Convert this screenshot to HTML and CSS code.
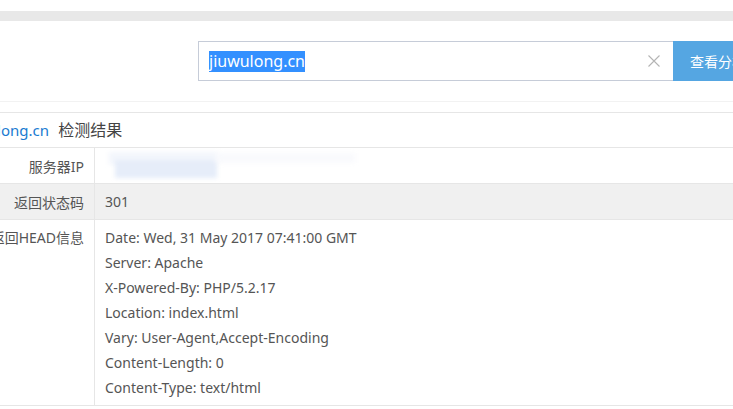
FILE: index.html
```html
<!DOCTYPE html>
<html>
<head>
    <title>检测结果</title>
    <link rel="stylesheet" href="styles.css">
</head>
<body>
    <div class="top-bar"></div>

    <div class="search-box">
        <div class="search-input">
            <span class="selected">jiuwulong.cn</span>
            <svg class="clear" width="12" height="12" viewBox="0 0 12 12">
                <path d="M0.5 0.5 L11.5 11.5 M11.5 0.5 L0.5 11.5" stroke="#b4b4b4" stroke-width="1.1" fill="none"/>
            </svg>
        </div>
        <button class="search-btn">查看分析结果</button>
    </div>

    <div class="result">
        <div class="result-title"><span class="domain">jiuwulong.cn</span> 检测结果</div>
        <table class="result-table">
            <tr>
                <td class="label">服务器IP</td>
                <td class="value">
                    <div class="ip-blur">
                        <span class="b1"></span><span class="b2"></span><span class="b3"></span>
                    </div>
                </td>
            </tr>
            <tr class="gray">
                <td class="label">返回状态码</td>
                <td class="value">301</td>
            </tr>
            <tr>
                <td class="label top">返回HEAD信息</td>
                <td class="value head">
                    Date: Wed, 31 May 2017 07:41:00 GMT<br>
                    Server: Apache<br>
                    X-Powered-By: PHP/5.2.17<br>
                    Location: index.html<br>
                    Vary: User-Agent,Accept-Encoding<br>
                    Content-Length: 0<br>
                    Content-Type: text/html
                </td>
            </tr>
        </table>
    </div>
</body>
</html>
```

FILE: styles.css
```css
body {
    margin: 0;
    overflow: hidden;
    background: #fff;
    font-family: "Noto Sans", "Noto Sans CJK SC", sans-serif;
    color: #555;
}
.top-bar {
    margin-top: 11px;
    height: 10px;
    background: #e8e8e8;
}
.search-box {
    display: flex;
    padding: 20px 0 20px 198px;
    border-bottom: 1px solid #f2f2f2;
    white-space: nowrap;
}
.search-input {
    flex: none;
    box-sizing: border-box;
    width: 475px;
    height: 40px;
    border: 1px solid #c6ccd8;
    border-right: none;
    display: flex;
    align-items: center;
    padding-left: 10px;
    padding-right: 13px;
}
.selected {
    background: #3390ff;
    color: #fff;
    font-size: 16px;
    line-height: 21px;
    height: 21px;
}
.clear {
    margin-left: auto;
}
.search-btn {
    flex: none;
    width: 110px;
    height: 40px;
    border: none;
    background: #55a6e2;
    color: #fff;
    font-family: "Noto Sans CJK SC", sans-serif;
    font-size: 14px;
    text-align: left;
    padding-left: 17px;
}
.result {
    margin-top: 10px;
    margin-left: -60px;
    border-top: 1px solid #e6e6e6;
}
.result-title {
    height: 34px;
    line-height: 34px;
    padding-left: 19px;
    font-size: 16px;
    color: #444;
    border-bottom: 1px solid #e6e6e6;
}
.domain {
    font-size: 15px;
    color: #1a7bd1;
    margin-right: 5px;
}
.result-table {
    border-collapse: collapse;
    width: 860px;
    font-size: 14px;
}
.result-table td {
    border-bottom: 1px solid #e6e6e6;
    padding: 0;
}
.result-table tr.gray td {
    background: #f0f0f0;
}
.label {
    width: 144px;
    text-align: right;
    padding-right: 10px !important;
    border-right: 1px solid #e6e6e6;
    height: 35px;
    white-space: nowrap;
}
.label.top {
    vertical-align: top;
    padding-top: 7px !important;
}
.value {
    padding-left: 10px !important;
}
.value.head {
    line-height: 25px;
    padding-top: 5px !important;
    padding-bottom: 5px !important;
}
.ip-blur {
    position: relative;
    height: 34px;
    filter: blur(2px);
}
.ip-blur span {
    position: absolute;
    display: block;
}
.ip-blur .b1 {
    left: 4px;
    top: 3px;
    width: 110px;
    height: 13px;
    background: #f3f6fc;
}
.ip-blur .b2 {
    left: 10px;
    top: 11px;
    width: 102px;
    height: 18px;
    background: #e6edf9;
}
.ip-blur .b3 {
    left: 110px;
    top: 4px;
    width: 140px;
    height: 10px;
    background: #f9fafd;
}
```
